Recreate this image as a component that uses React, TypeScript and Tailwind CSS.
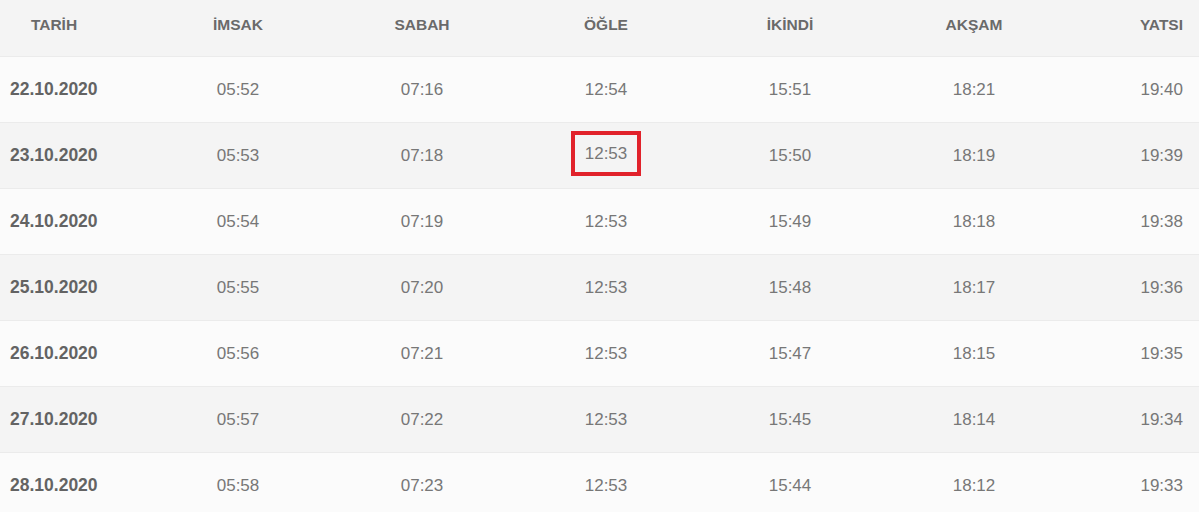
const headers = ["TARİH", "İMSAK", "SABAH", "ÖĞLE", "İKİNDİ", "AKŞAM", "YATSI"];

const rows = [
  ["22.10.2020", "05:52", "07:16", "12:54", "15:51", "18:21", "19:40"],
  ["23.10.2020", "05:53", "07:18", "12:53", "15:50", "18:19", "19:39"],
  ["24.10.2020", "05:54", "07:19", "12:53", "15:49", "18:18", "19:38"],
  ["25.10.2020", "05:55", "07:20", "12:53", "15:48", "18:17", "19:36"],
  ["26.10.2020", "05:56", "07:21", "12:53", "15:47", "18:15", "19:35"],
  ["27.10.2020", "05:57", "07:22", "12:53", "15:45", "18:14", "19:34"],
  ["28.10.2020", "05:58", "07:23", "12:53", "15:44", "18:12", "19:33"],
];

const grid = "grid grid-cols-[146px_repeat(5,184px)_1fr] items-center";

export default function App() {
  return (
    <div className="w-[1199px] h-[512px] overflow-hidden bg-[#fbfbfb] font-['Liberation_Sans',Arial,sans-serif]">
      {/* Header */}
      <div className={`${grid} h-[57px] pb-[6px] bg-[#f4f4f4] border-b border-[#ebebeb] text-[15.5px] font-bold text-[#6a6a6a]`}>
        {headers.map((h, i) => (
          <div
            key={h}
            className={
              i === 0
                ? "pl-[10px]"
                : i === headers.length - 1
                ? "text-right pr-4"
                : "text-center"
            }
          >
            {i === 0 ? <span className="inline-block w-[88px] text-center">{h}</span> : h}
          </div>
        ))}
      </div>

      {rows.map((row, r) => (
        <div
          key={row[0]}
          className={`${grid} h-[66px] border-b border-[#ebebeb] text-[17px] text-[#777] ${
            r % 2 === 1 ? "bg-[#f4f4f4]" : "bg-[#fbfbfb]"
          }`}
        >
          {row.map((cell, i) => (
            <div
              key={i}
              className={
                i === 0
                  ? "pl-[10px] font-bold text-[17.5px] text-[#636363]"
                  : i === row.length - 1
                  ? "text-right pr-4"
                  : "text-center"
              }
            >
              {r === 1 && i === 3 ? (
                <span className="inline-block border-4 border-[#e1222b] px-[10px] pt-[9px] pb-[8px] mb-[4px] leading-5">
                  {cell}
                </span>
              ) : (
                cell
              )}
            </div>
          ))}
        </div>
      ))}
    </div>
  );
}
